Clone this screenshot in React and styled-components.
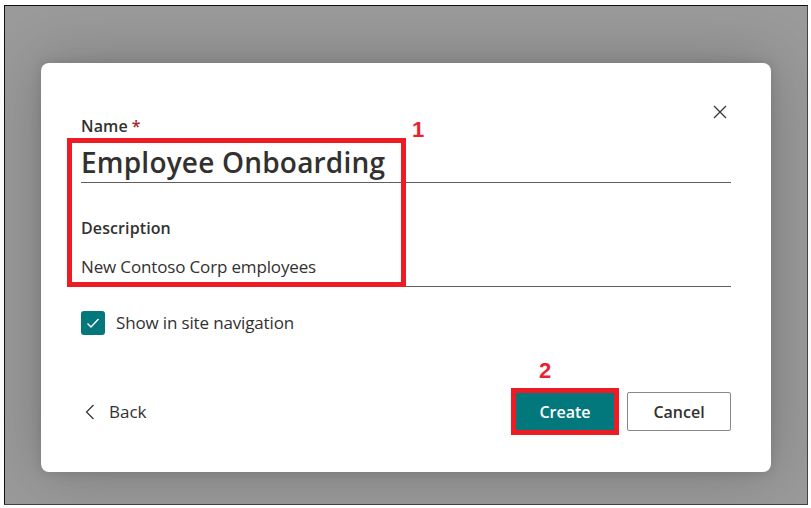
import React from "react";
import styled, { createGlobalStyle } from "styled-components";

const Global = createGlobalStyle`
  html, body { margin: 0; padding: 0; background: #ffffff; }
  body { font-family: "Open Sans", "Noto Sans", sans-serif; }
  * { box-sizing: border-box; }
`;

const Frame = styled.div`
  margin: 5px 0 0 4px;
  width: 804px;
  height: 500px;
  border: 1px solid #111;
  border-right-color: #444;
  border-bottom-color: #444;
  background: #9a9a9a;
  padding: 57px 36px 32px 36px;
  display: flex;
`;

const Dialog = styled.div`
  position: relative;
  flex: 1;
  background: #fff;
  border-radius: 8px;
  box-shadow: 0 0 60px rgba(0, 0, 0, 0.22), 0 0 12px rgba(0, 0, 0, 0.12);
  padding: 52px 40px 0 40px;
  display: flex;
  flex-direction: column;
  color: #323130;
`;

const CloseButton = styled.button`
  position: absolute;
  top: 40px;
  right: 42px;
  width: 18px;
  height: 18px;
  padding: 0;
  border: 0;
  background: transparent;
  display: flex;
  align-items: center;
  justify-content: center;
`;

const Label = styled.div`
  font-size: 16px;
  font-weight: 600;
  line-height: 22px;
  letter-spacing: 0.1px;
  color: #323130;
`;

const Required = styled.span`
  color: #a4262c;
  margin-left: 4px;
`;

const Field = styled.div`
  display: flex;
  align-items: flex-end;
  height: ${(p) => p.$h}px;
  border-bottom: 1px solid #605e5c;
  font-size: ${(p) => p.$size}px;
  font-weight: ${(p) => p.$weight};
  line-height: ${(p) => p.$lh}px;
  letter-spacing: ${(p) => p.$ls || 0}px;
  padding-bottom: ${(p) => p.$pb}px;
  color: #323130;
  margin-bottom: ${(p) => p.$mb}px;
`;

const CheckRow = styled.label`
  display: flex;
  align-items: center;
  gap: 11px;
  font-size: 17px;
  line-height: 22px;
  letter-spacing: -0.15px;
  color: #323130;
`;

const Box = styled.span`
  width: 24px;
  height: 24px;
  border-radius: 3px;
  background: #03787c;
  display: flex;
  align-items: center;
  justify-content: center;
`;

const Footer = styled.div`
  margin-top: 57px;
  display: flex;
  align-items: center;
  justify-content: space-between;
`;

const BackLink = styled.button`
  display: flex;
  align-items: center;
  gap: 14px;
  padding: 0 0 0 4px;
  border: 0;
  background: transparent;
  font-family: inherit;
  font-size: 17px;
  color: #323130;
`;

const Buttons = styled.div`
  display: flex;
  gap: 12px;
`;

const Button = styled.button`
  position: relative;
  height: 39px;
  width: ${(p) => p.$w}px;
  border-radius: 2px;
  font-family: inherit;
  font-size: 16px;
  font-weight: 600;
  letter-spacing: 0px;
  border: 1px solid ${(p) => (p.$primary ? "#03787c" : "#8a8886")};
  background: ${(p) => (p.$primary ? "#03787c" : "#fff")};
  color: ${(p) => (p.$primary ? "#fff" : "#323130")};
`;

const Highlight = styled.div`
  position: absolute;
  left: ${(p) => p.$x}px;
  top: ${(p) => p.$y}px;
  width: ${(p) => p.$w}px;
  height: ${(p) => p.$h}px;
  border: 5px solid #ed1c24;
  pointer-events: none;
`;

const Marker = styled.div`
  position: absolute;
  left: ${(p) => p.$x}px;
  top: ${(p) => p.$y}px;
  font-family: "Liberation Sans", Arial, sans-serif;
  font-weight: 700;
  font-size: 22px;
  line-height: 24px;
  color: #e8232f;
`;

export default function App() {
  return (
    <>
      <Global />
      <Frame>
        <Dialog>
          <CloseButton aria-label="Close">
            <svg width="14" height="14" viewBox="0 0 14 14">
              <path d="M1 1 L13 13 M13 1 L1 13" stroke="#323130" strokeWidth="1.2" />
            </svg>
          </CloseButton>
          <Label>
            Name<Required>*</Required>
          </Label>
          <Field $h={46} $size={28} $weight={600} $lh={38} $pb={1} $mb={34} $ls={0.2}>
            Employee Onboarding
          </Field>
          <Label>Description</Label>
          <Field $h={48} $size={17} $weight={400} $lh={22} $pb={8} $mb={24} $ls={-0.15}>
            New Contoso Corp employees
          </Field>
          <CheckRow>
            <Box>
              <svg width="14" height="14" viewBox="0 0 14 14">
                <path d="M1.5 7.5 L5 11 L12.5 3" stroke="#fff" strokeWidth="1.4" fill="none" />
              </svg>
            </Box>
            Show in site navigation
          </CheckRow>
          <Footer>
            <BackLink>
              <svg width="10" height="16" viewBox="0 0 10 16">
                <path d="M8.5 1 L1.5 8 L8.5 15" stroke="#323130" strokeWidth="1.2" fill="none" />
              </svg>
              Back
            </BackLink>
            <Buttons>
              <Button $primary $w={100}>Create</Button>
              <Button $w={104}>Cancel</Button>
            </Buttons>
          </Footer>
          <Highlight $x={26} $y={75} $w={339} $h={149} />
          <Marker $x={371} $y={55}>1</Marker>
          <Highlight $x={470} $y={325} $w={108} $h={47} />
          <Marker $x={498} $y={296}>2</Marker>
        </Dialog>
      </Frame>
    </>
  );
}
